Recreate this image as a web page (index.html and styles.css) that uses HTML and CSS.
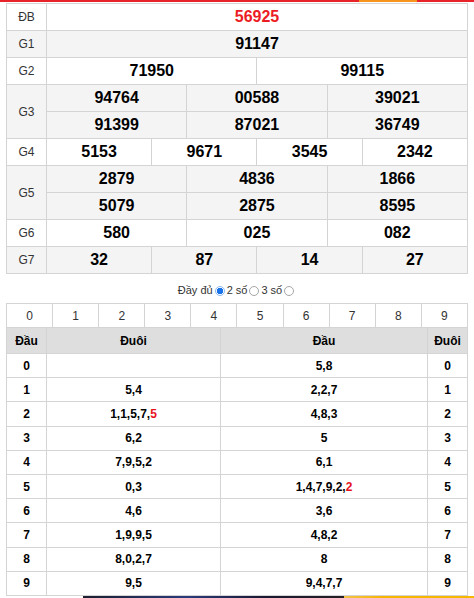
FILE: index.html
```html
<!DOCTYPE html>
<html lang="vi">
<head>
<meta charset="utf-8">
<title>KQXS</title>
<link rel="stylesheet" href="styles.css">
</head>
<body>
<div class="topbar"><span class="seg-red"></span><span class="seg-orange"></span><span class="seg-red2"></span></div>
<div class="wrap">
  <table class="kq">
    <colgroup>
      <col class="c-label">
      <col><col><col><col><col><col><col><col><col><col><col><col>
    </colgroup>
    <tbody>
      <tr class="white"><td class="lbl">ĐB</td><td colspan="12" class="num red">56925</td></tr>
      <tr class="gray"><td class="lbl">G1</td><td colspan="12" class="num">91147</td></tr>
      <tr class="white"><td class="lbl">G2</td><td colspan="6" class="num">71950</td><td colspan="6" class="num">99115</td></tr>
      <tr class="gray"><td class="lbl" rowspan="2">G3</td><td colspan="4" class="num">94764</td><td colspan="4" class="num">00588</td><td colspan="4" class="num">39021</td></tr>
      <tr class="gray"><td colspan="4" class="num">91399</td><td colspan="4" class="num">87021</td><td colspan="4" class="num">36749</td></tr>
      <tr class="white"><td class="lbl">G4</td><td colspan="3" class="num">5153</td><td colspan="3" class="num">9671</td><td colspan="3" class="num">3545</td><td colspan="3" class="num">2342</td></tr>
      <tr class="gray"><td class="lbl" rowspan="2">G5</td><td colspan="4" class="num">2879</td><td colspan="4" class="num">4836</td><td colspan="4" class="num">1866</td></tr>
      <tr class="gray"><td colspan="4" class="num">5079</td><td colspan="4" class="num">2875</td><td colspan="4" class="num">8595</td></tr>
      <tr class="white"><td class="lbl">G6</td><td colspan="4" class="num">580</td><td colspan="4" class="num">025</td><td colspan="4" class="num">082</td></tr>
      <tr class="gray"><td class="lbl">G7</td><td colspan="3" class="num">32</td><td colspan="3" class="num">87</td><td colspan="3" class="num">14</td><td colspan="3" class="num">27</td></tr>
    </tbody>
  </table>

  <div class="opts">
    <span>Đầy đủ</span><span class="radio on"></span><span>2 số</span><span class="radio"></span><span>3 số</span><span class="radio"></span>
  </div>

  <table class="digits">
    <tr><td>0</td><td>1</td><td>2</td><td>3</td><td>4</td><td>5</td><td>6</td><td>7</td><td>8</td><td>9</td></tr>
  </table>

  <table class="loto">
    <colgroup><col class="c1"><col class="c2"><col class="c3"><col class="c4"></colgroup>
    <thead>
      <tr><th>Đầu</th><th>Đuôi</th><th>Đầu</th><th>Đuôi</th></tr>
    </thead>
    <tbody>
      <tr><td>0</td><td></td><td>5,8</td><td>0</td></tr>
      <tr><td>1</td><td>5,4</td><td>2,2,7</td><td>1</td></tr>
      <tr><td>2</td><td>1,1,5,7,<span class="hl">5</span></td><td>4,8,3</td><td>2</td></tr>
      <tr><td>3</td><td>6,2</td><td>5</td><td>3</td></tr>
      <tr><td>4</td><td>7,9,5,2</td><td>6,1</td><td>4</td></tr>
      <tr><td>5</td><td>0,3</td><td>1,4,7,9,2,<span class="hl">2</span></td><td>5</td></tr>
      <tr><td>6</td><td>4,6</td><td>3,6</td><td>6</td></tr>
      <tr><td>7</td><td>1,9,9,5</td><td>4,8,2</td><td>7</td></tr>
      <tr><td>8</td><td>8,0,2,7</td><td>8</td><td>8</td></tr>
      <tr><td>9</td><td>9,5</td><td>9,4,7,7</td><td>9</td></tr>
    </tbody>
  </table>

  <div class="banner"><span class="b-dark"></span><span class="b-yellow"></span></div>
</div>
</body>
</html>
```

FILE: styles.css
```css
html, body {
  margin: 0;
  padding: 0;
  background: #fff;
}
body {
  font-family: "Liberation Sans", Arial, sans-serif;
  color: #000;
  overflow: hidden;
}
.topbar {
  display: flex;
  height: 2px;
  margin-bottom: 1px;
}
.seg-red { width: 359px; background: #e8232a; }
.seg-orange { width: 58px; background: #f7941d; }
.seg-red2 { flex: 1; background: #e8232a; }

.wrap {
  padding: 0 6px;
}

table {
  border-collapse: collapse;
  width: 100%;
  table-layout: fixed;
}
td, th {
  border: 1px solid #d4d4d4;
  padding: 0;
  text-align: center;
}

.kq .c-label { width: 40px; }
.kq td { height: 26px; }
.kq tr.gray td { background: #f4f4f4; }
.kq tr.white td { background: #fff; }
.kq .lbl {
  font-size: 12px;
  color: #333;
}
.kq .num {
  font-size: 16px;
  font-weight: bold;
  color: #000;
}
.kq .num.red { color: #ec1c24; }

.opts {
  height: 29px;
  display: flex;
  justify-content: center;
  align-items: center;
  padding-top: 2px;
  box-sizing: border-box;
  font-size: 11px;
  color: #333;
}
.radio {
  width: 8px;
  height: 8px;
  border: 1px solid #a6a6a6;
  border-radius: 50%;
  margin: 0 2px 0 2px;
  box-sizing: content-box;
  background: #fff;
  position: relative;
  top: 1px;
}
.radio.on {
  border-color: #8ab8f0;
  background: radial-gradient(circle, #1a73e8 0 3px, #fff 3.5px);
}

.digits td {
  height: 23px;
  font-size: 12px;
  color: #333;
}

.loto .c1 { width: 40px; }
.loto .c2 { width: 174px; }
.loto .c3 { width: 207px; }
.loto .c4 { width: 40px; }
.loto thead th {
  border-top: 0;
  height: 25px;
  background: #dedede;
  font-size: 12px;
  font-weight: bold;
  color: #000;
}
.loto tbody td {
  height: 23.2px;
  font-size: 12px;
  font-weight: bold;
  color: #000;
}
.loto .hl { color: #e8101e; }

.banner {
  display: flex;
  height: 40px;
  margin-left: 77px;
  margin-right: -6px;
}
.b-dark {
  width: 261px;
  background: linear-gradient(90deg, #1b1f2e, #2a3a7a 40%, #1a1830 70%, #242024);
}
.b-yellow {
  flex: 1;
  background: linear-gradient(90deg, #f2c24a, #f7b500 30%, #f5b800);
}
```
